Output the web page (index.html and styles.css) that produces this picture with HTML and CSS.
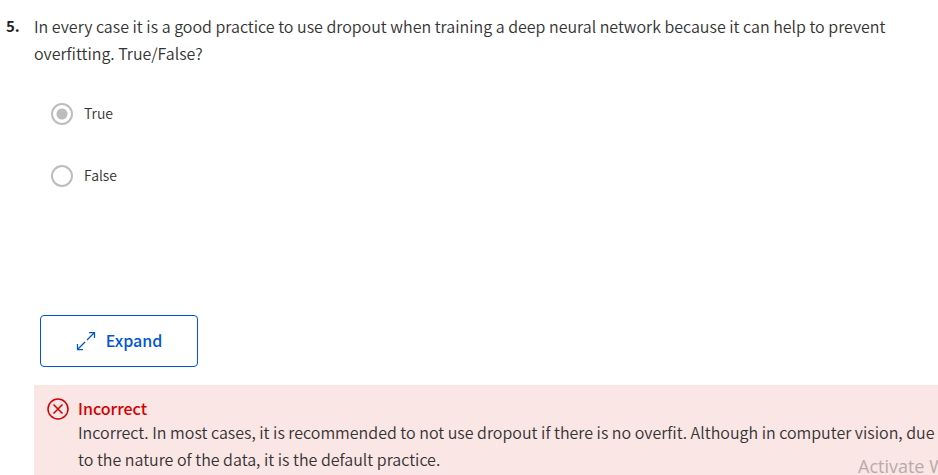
FILE: index.html
```html
<!DOCTYPE html>
<html lang="en">
<head>
<meta charset="utf-8">
<meta name="viewport" content="width=device-width, initial-scale=1">
<title>Quiz question</title>
<link rel="stylesheet" href="styles.css">
</head>
<body>
<main class="question">
  <div class="number">5.</div>
  <div class="content">
    <fieldset class="choices">
      <legend class="prompt">In every case it is a good practice to use dropout when training a deep neural network because it can help to prevent overfitting. True/False?</legend>
      <label class="option"><input class="radio" type="radio" name="answer" value="true" checked><span>True</span></label>
      <label class="option"><input class="radio" type="radio" name="answer" value="false"><span>False</span></label>
    </fieldset>
    <button class="expand" type="button">
      <svg class="expand-icon" viewBox="0 0 20 20" aria-hidden="true"><path d="M1.500 13v5.500h5.500M13 1.500h5.500v5.500M1.500 18.500l7.500-7.500M11 9l7.500-7.500"/></svg>
      <span>Expand</span>
    </button>
    <section class="feedback">
      <svg class="feedback-icon" viewBox="0 0 22 22" aria-hidden="true"><circle cx="11" cy="11" r="10"/><path d="M6.500 6.500l9 9M15.500 6.500l-9 9"/></svg>
      <div>
        <h2 class="verdict">Incorrect</h2>
        <p class="explanation">Incorrect. In most cases, it is recommended to not use dropout if there is no overfit. Although in computer vision, due to the nature of the data, it is the default practice.</p>
      </div>
    </section>
  </div>
</main>
<div class="watermark">Activate W</div>
</body>
</html>
```
FILE: styles.css
```css
* {
  box-sizing: border-box;
}

body {
  margin: 0;
  min-height: 100vh;
  position: relative;
  overflow: hidden;
  background: #fff;
  color: #333;
  font-family: "Noto Sans CJK SC", "Noto Sans", sans-serif;
  font-size: 16px;
  font-weight: 350;
  line-height: 27px;
}

.question {
  display: grid;
  grid-template-columns: 28px 1fr;
  padding: 13px 0 0 6px;
}

.number {
  color: #1f1f1f;
  font-size: 15px;
  font-weight: 700;
  line-height: 25px;
}

.choices {
  margin: 0;
  padding: 0;
  border: 0;
}

.prompt {
  padding: 0 40px 32px 0;
}

.option {
  display: flex;
  align-items: center;
  gap: 11px;
  height: 30px;
  margin: 0 0 32px 17px;
  font-size: 14px;
  line-height: 24px;
}

.option span {
  padding-bottom: 2px;
}

.radio {
  appearance: none;
  width: 22px;
  height: 22px;
  margin: 0;
  border: 2px solid #bdbdbd;
  border-radius: 50%;
  background: #fff;
}

.radio:checked {
  background: radial-gradient(circle, #bdbdbd 5px, #fff 6px);
}

.expand {
  display: flex;
  align-items: center;
  justify-content: center;
  gap: 10px;
  width: 158px;
  height: 52px;
  margin: 92px 0 18px 6px;
  padding-bottom: 2px;
  border: 1px solid #0056d2;
  border-radius: 4px;
  background: #fff;
  color: #0056d2;
  font: inherit;
  font-weight: 500;
}

.expand-icon {
  width: 20px;
  height: 20px;
  fill: none;
  stroke: #0056d2;
  stroke-width: 1.25;
}

.feedback {
  display: flex;
  gap: 9px;
  padding: 12px 0 4px 13px;
  background: #fae6e5;
}

.feedback-icon {
  flex: none;
  width: 22px;
  height: 22px;
  margin-top: 1px;
  fill: none;
  stroke: #d30001;
  stroke-width: 1.5;
}

.verdict {
  margin: 0;
  color: #d30001;
  font-size: 16px;
  font-weight: 500;
  line-height: 22px;
}

.explanation {
  margin: 0;
}

.watermark {
  position: absolute;
  right: 0;
  bottom: 0;
  width: 80px;
  overflow: hidden;
  color: #b5abab;
  font-family: "Open Sans", sans-serif;
  font-size: 18px;
  font-weight: 400;
  line-height: 22px;
  white-space: nowrap;
}
```
